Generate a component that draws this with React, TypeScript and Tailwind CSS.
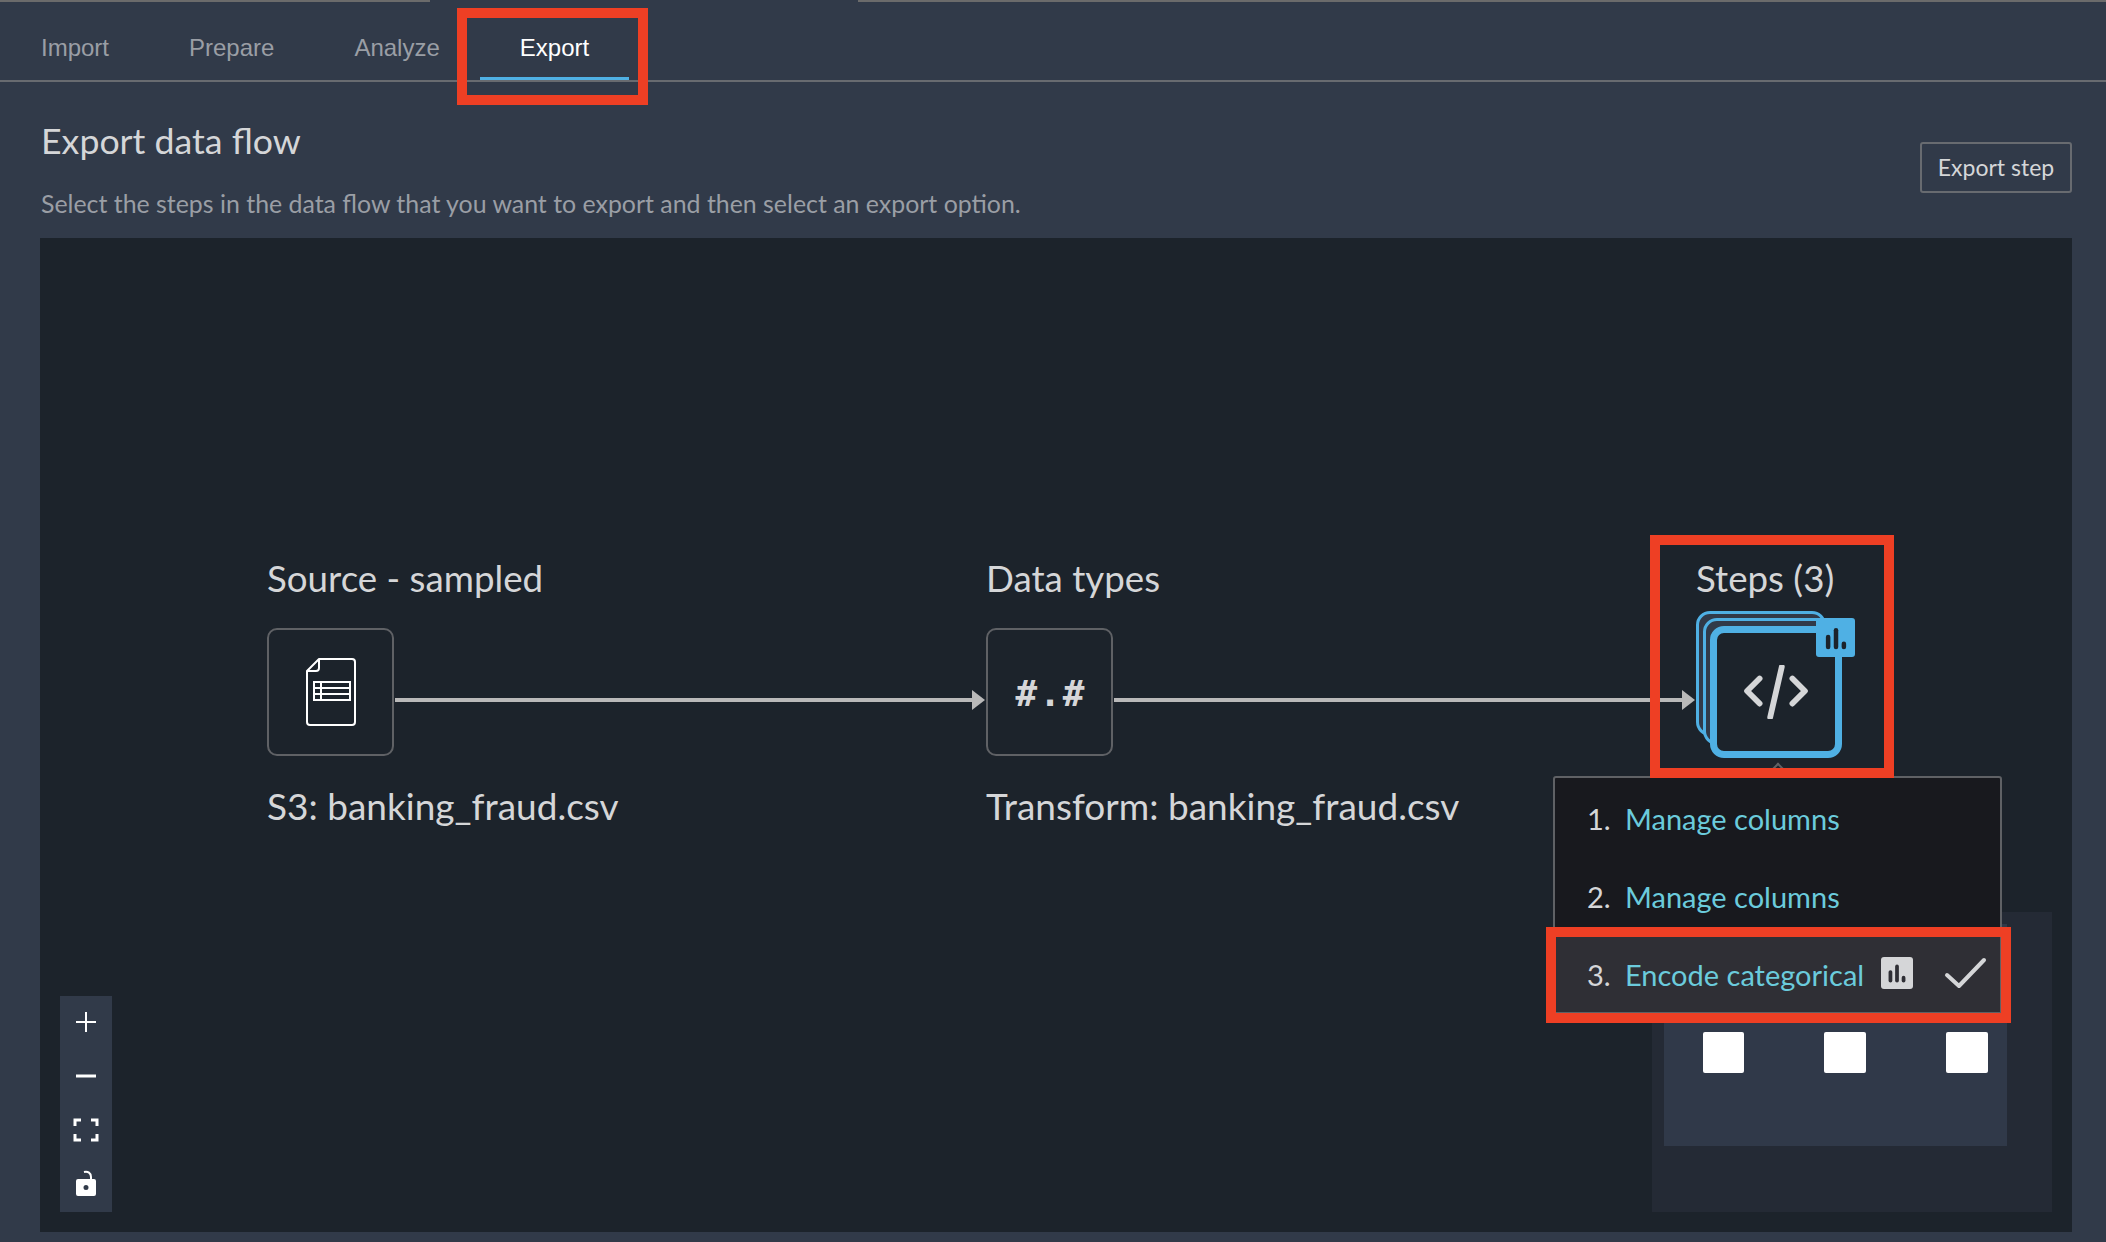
import type { ReactNode } from "react";

function BarsGlyph({ className }: { className: string }) {
  return (
    <svg viewBox="0 0 32 32" className={className} fill="currentColor">
      <rect x="7" y="13" width="4" height="13" rx="2" />
      <rect x="14" y="7" width="4" height="19" rx="2" />
      <rect x="21" y="19" width="4" height="7" rx="2" />
    </svg>
  );
}

function FileIcon() {
  return (
    <svg width="52" height="70" viewBox="0 0 52 70" fill="none" stroke="#ffffff" strokeWidth="2">
      <path d="M14 2H47a3 3 0 0 1 3 3V65a3 3 0 0 1-3 3H5a3 3 0 0 1-3-3V14Z" strokeLinejoin="round" />
      <path d="M14 2V11a3 3 0 0 1-3 3H2" strokeLinejoin="round" />
      <rect x="9" y="25" width="36" height="18" />
      <path d="M9 31H45M9 37H45M16 25V43" />
    </svg>
  );
}

function StepsIcon() {
  return (
    <div className="relative h-[148px] w-[160px]">
      <div className="absolute left-0 top-0 h-[125px] w-[130px] rounded-[14px] border-[3px] border-[#4fb0e4] bg-[#313a49]" />
      <div className="absolute left-[7px] top-[7px] h-[127px] w-[130px] rounded-[14px] border-[3px] border-[#4fb0e4] bg-[#313a49]" />
      <div className="absolute left-[14px] top-[15px] flex h-[132px] w-[132px] items-center justify-center rounded-[14px] border-[7px] border-[#4fb0e4] bg-[#1c232b]">
        <svg width="64" height="54" viewBox="0 0 66 56" fill="none" stroke="#d5d6d8" strokeWidth="6" strokeLinecap="round" strokeLinejoin="round">
          <path d="M16 14 3 27l13 13M50 14l13 13-13 13M39 2 27 54" />
        </svg>
      </div>
      <div className="absolute left-[120px] top-[7px] flex h-[39px] w-[39px] items-center justify-center rounded-[3px] bg-[#4fb0e4] text-[#1c232b]">
        <BarsGlyph className="h-[36px] w-[36px]" />
      </div>
    </div>
  );
}

function Connector({ width }: { width: string }) {
  return (
    <div className={`mt-[134px] flex h-[20px] items-center pl-px ${width}`}>
      <div className="h-[4px] flex-1 bg-[#b9b9b9]" />
      <div className="h-0 w-0 border-y-[10px] border-l-[13px] border-y-transparent border-l-[#b9b9b9]" />
      <div className="w-px" />
    </div>
  );
}

function FlowNode({ label, caption, children }: { label: string; caption: string; children: ReactNode }) {
  return (
    <div className="flex w-[127px] flex-col whitespace-nowrap text-[36.7px] leading-[44px] text-[#d5d6d8]">
      <div>{label}</div>
      <div className="mt-[28px] flex h-[128px] w-[127px] items-center justify-center rounded-[10px] border-2 border-[#5f6165]">{children}</div>
      <div className="mt-[28px] text-[37px]">{caption}</div>
    </div>
  );
}

function MenuRow({ n, label, active }: { n: number; label: string; active?: boolean }) {
  return (
    <div className={`flex h-[78px] items-center pl-[32px] pt-[4px] text-[29px] ${active ? "bg-[#2f2f35]" : ""}`}>
      <span className="w-[38px] text-[#d5d6d8]">{n}.</span>
      <span className="text-[#6bcbdc]">{label}</span>
      {active && (
        <>
          <span className="-mt-[4px] ml-[17px] flex h-[32px] w-[32px] items-center justify-center rounded-[3px] bg-[#d5d6d8] text-[#2f2f35]">
            <BarsGlyph className="h-[30px] w-[30px]" />
          </span>
          <svg className="-mt-[4px] ml-[31px]" width="43" height="32" viewBox="0 0 43 32" fill="none" stroke="#d5d6d8" strokeWidth="4" strokeLinecap="round" strokeLinejoin="round">
            <path d="M3 18 15 29 40 3" />
          </svg>
        </>
      )}
    </div>
  );
}

function ZoomControls() {
  return (
    <div className="absolute bottom-[20px] left-[20px] grid w-[52px] auto-rows-[54px] place-items-center bg-[#313a49] text-white">
      <svg className="-mt-[2px]" width="20" height="20" viewBox="0 0 20 20" stroke="currentColor" strokeWidth="2"><path d="M0 10H20M10 0V20" /></svg>
      <svg className="-mt-[2px]" width="20" height="20" viewBox="0 0 20 20" stroke="currentColor" strokeWidth="3"><path d="M0 10H20" /></svg>
      <svg className="-mt-[2px]" width="26" height="24" viewBox="0 0 26 24" fill="none" stroke="currentColor" strokeWidth="3"><path d="M8 2H2V8M18 2H24V8M2 16V22H8M24 16V22H18" /></svg>
      <svg className="-mt-[4px]" width="20" height="26" viewBox="0 0 20 26" fill="currentColor">
        <path d="M8 2c4-1 7 1 7 5v2" fill="none" stroke="currentColor" strokeWidth="2" />
        <path fillRule="evenodd" d="M2 9H18a2 2 0 0 1 2 2V24a2 2 0 0 1-2 2H2a2 2 0 0 1-2-2V11a2 2 0 0 1 2-2ZM10 15a2.5 2.5 0 1 0 0 5 2.5 2.5 0 0 0 0-5Z" />
      </svg>
    </div>
  );
}

function Minimap() {
  return (
    <div className="absolute bottom-[20px] right-[20px] h-[300px] w-[400px] bg-[#242a35] p-[12px]">
      <div className="h-[222px] w-[343px] bg-[#303949]">
        <div className="flex gap-[80px] pl-[39px] pt-[108px]">
          <div className="h-[41px] w-[41px] rounded-[2px] bg-white" />
          <div className="h-[41px] w-[42px] rounded-[2px] bg-white" />
          <div className="h-[41px] w-[42px] rounded-[2px] bg-white" />
        </div>
      </div>
    </div>
  );
}

function Canvas() {
  return (
    <div className="relative ml-[40px] mr-[34px] h-[994px] bg-[#1c232b]">
      <div className="flex pl-[227px] pt-[318px]">
        <FlowNode label="Source - sampled" caption="S3: banking_fraud.csv">
          <FileIcon />
        </FlowNode>
        <Connector width="w-[592px]" />
        <FlowNode label="Data types" caption="Transform: banking_fraud.csv">
          <span className="pl-[3px] pt-[3px] font-['DejaVu_Sans_Mono',monospace] text-[36px] font-bold tracking-[2px]">#.#</span>
        </FlowNode>
        <Connector width="w-[583px]" />
        <div className="whitespace-nowrap text-[36.7px] leading-[44px] text-[#d5d6d8]">
          <div>Steps (3)</div>
          <div className="mt-[11px]">
            <StepsIcon />
          </div>
        </div>
      </div>

      <ZoomControls />
      <Minimap />

      {/* popover */}
      <div className="absolute left-[1732px] top-[527px] h-[12px] w-[12px] rotate-45 border-l-2 border-t-2 border-[#5f6165] bg-[#1c232b]" />
      <div className="absolute left-[1513px] top-[538px] w-[449px] rounded-[3px] border-2 border-[#5f6165] bg-[#18191e]">
        <MenuRow n={1} label="Manage columns" />
        <MenuRow n={2} label="Manage columns" />
        <MenuRow n={3} label="Encode categorical" active />
      </div>

      {/* callouts */}
      <div className="absolute left-[1610px] top-[297px] h-[243px] w-[244px] border-[10px] border-[#ee3f24]" />
      <div className="absolute left-[1506px] top-[689px] h-[96px] w-[465px] border-[10px] border-[#ee3f24]" />
    </div>
  );
}

export default function App() {
  const tabs = ["Import", "Prepare", "Analyze", "Export"];
  return (
    <div className="relative h-[1242px] w-[2106px] overflow-hidden bg-[#313a49] font-['Lato','Noto_Sans',sans-serif]">
      <div className="flex h-[2px]">
        <div className="w-[430px] bg-[#6b6b6b]" />
        <div className="w-[428px]" />
        <div className="flex-1 bg-[#6b6b6b]" />
      </div>
      <div className="flex h-[80px] border-b-2 border-[#686b70] pl-px font-['Liberation_Sans',sans-serif] text-[24px]">
        {tabs.map((tab) => (
          <div key={tab} className={`flex h-[78px] items-center px-10 ${tab === "Export" ? "border-b-[3px] border-[#4fb0e4] pt-[16px] text-white" : "pt-[13px] text-[#9a9ea5]"}`}>
            {tab}
          </div>
        ))}
      </div>
      <div className="absolute left-[457px] top-[8px] h-[97px] w-[191px] border-[10px] border-[#ee3f24]" />

      <div className="flex h-[156px] items-start justify-between pl-[41px] pr-[34px]">
        <div>
          <h1 className="mt-[37px] text-[35.7px] leading-[44px] font-normal text-[#d5d6d8]">Export data flow</h1>
          <p className="mt-[22px] text-[24.9px] leading-[36px] text-[#9a9ea5]">
            Select the steps in the data flow that you want to export and then select an export option.
          </p>
        </div>
        <button className="mt-[60px] h-[51px] w-[152px] rounded-[3px] border-2 border-[#686b70] text-[23px] text-[#d5d6d8]">Export step</button>
      </div>
      <Canvas />
    </div>
  );
}
